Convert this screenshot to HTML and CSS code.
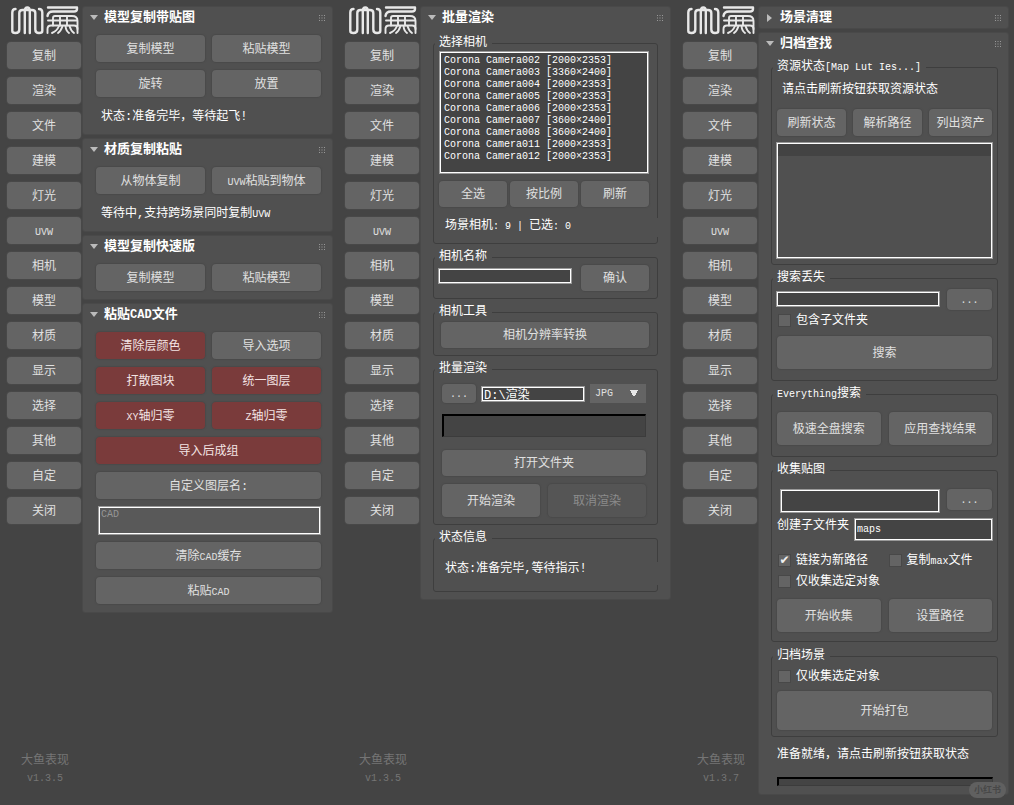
FILE: index.html
```html
<!DOCTYPE html>
<html lang="zh-CN">

<head>
    <meta charset="UTF-8">
    <meta name="viewport" content="width=device-width, initial-scale=1.0">
    <title>大鱼表现</title>
    <link rel="stylesheet" href="styles.css">
</head>

<body>
    <svg class="defs" aria-hidden="true">
        <symbol id="logo" viewBox="0 0 68 29">
            <g fill="none" stroke="#e8e8e8" stroke-width="2.4" stroke-linecap="round" stroke-linejoin="round">
                <path d="M4.500 3Q1.300 3 1.300 6.500V25Q1.300 27 4.500 27Q8.300 27 8.300 23.500V7Q8.300 4 11.500 4H21Q24.300 4 24.300 7V23.500Q24.300 27 28 27Q31.300 27 31.300 25V6.500Q31.300 3 28 3" />
                <path d="M13.800 27V5Q13.800 1.500 16.300 1.500T18.800 5V27" />
                <path d="M37 1.500H66V3Q66 5.500 63 5.500H42Q37 5.500 36.500 10" />
                <g stroke-width="1.900">
                    <path d="M36.500 27V23Q36.500 19.500 40 19.500H63Q66.500 19.500 66.500 23V27" />
                    <path d="M37 14.500H66.500M42 19.500V12Q42 10 44 10H61Q66.500 10 66.500 15V23M49 10V19.500M56 10V19.500" />
                    <path d="M41 27Q46 25 48 20M47 27Q50 25 51.500 20M54.500 20Q55 25 58 27M58.500 20Q60 25 63 27" />
                </g>
            </g>
        </symbol>
        <symbol id="grip" viewBox="0 0 6 6">
            <path d="M0 .5H6M0 3H6M0 5.500H6" stroke="#999" stroke-dasharray="1 1.500" />
        </symbol>
    </svg>

    <main class="desk">
        <!-- 复制 -->
        <section class="panel">
            <nav class="side">
                <svg class="logo" role="img" aria-label="大鱼"><use href="#logo" /></svg>
                <button>复制</button>
                <button>渲染</button>
                <button>文件</button>
                <button>建模</button>
                <button>灯光</button>
                <button><span class="en">UVW</span></button>
                <button>相机</button>
                <button>模型</button>
                <button>材质</button>
                <button>显示</button>
                <button>选择</button>
                <button>其他</button>
                <button>自定</button>
                <button>关闭</button>
                <div class="version">大鱼表现<br><span class="en">v1.3.5</span></div>
            </nav>
            <div class="rollouts">
                <details class="rollout" open>
                    <summary>模型复制带贴图<svg class="grip"><use href="#grip" /></svg></summary>
                    <div class="tools">
                        <button>复制模型</button>
                        <button>粘贴模型</button>
                        <button>旋转</button>
                        <button>放置</button>
                    </div>
                    <p class="note">状态:准备完毕，等待起飞!</p>
                </details>
                <details class="rollout" open>
                    <summary>材质复制粘贴<svg class="grip"><use href="#grip" /></svg></summary>
                    <div class="tools">
                        <button>从物体复制</button>
                        <button><span class="en">UVW</span>粘贴到物体</button>
                    </div>
                    <p class="note">等待中,支持跨场景同时复制<span class="en">UVW</span></p>
                </details>
                <details class="rollout" open>
                    <summary>模型复制快速版<svg class="grip"><use href="#grip" /></svg></summary>
                    <div class="tools last">
                        <button>复制模型</button>
                        <button>粘贴模型</button>
                    </div>
                </details>
                <details class="rollout" open>
                    <summary>粘贴<span class="en">CAD</span>文件<svg class="grip"><use href="#grip" /></svg></summary>
                    <div class="tools last">
                        <button class="red">清除层颜色</button>
                        <button>导入选项</button>
                        <button class="red">打散图块</button>
                        <button class="red">统一图层</button>
                        <button class="red"><span class="en">XY</span>轴归零</button>
                        <button class="red"><span class="en">Z</span>轴归零</button>
                        <button class="red wide">导入后成组</button>
                        <button class="wide">自定义图层名:</button>
                        <textarea class="field layer-name wide" aria-label="自定义图层名">CAD</textarea>
                        <button class="wide">清除<span class="en">CAD</span>缓存</button>
                        <button class="wide">粘贴<span class="en">CAD</span></button>
                    </div>
                </details>
            </div>
        </section>

        <!-- 渲染 -->
        <section class="panel">
            <nav class="side">
                <svg class="logo" role="img" aria-label="大鱼"><use href="#logo" /></svg>
                <button>复制</button>
                <button>渲染</button>
                <button>文件</button>
                <button>建模</button>
                <button>灯光</button>
                <button><span class="en">UVW</span></button>
                <button>相机</button>
                <button>模型</button>
                <button>材质</button>
                <button>显示</button>
                <button>选择</button>
                <button>其他</button>
                <button>自定</button>
                <button>关闭</button>
                <div class="version">大鱼表现<br><span class="en">v1.3.5</span></div>
            </nav>
            <div class="rollouts">
                <details class="rollout" open>
                    <summary>批量渲染<svg class="grip"><use href="#grip" /></svg></summary>
                    <div class="groups render">
                        <fieldset>
                            <legend>选择相机</legend>
                            <select class="field cameras" multiple aria-label="选择相机">
                                <option>Corona Camera002 [2000×2353]</option>
                                <option>Corona Camera003 [3360×2400]</option>
                                <option>Corona Camera004 [2000×2353]</option>
                                <option>Corona Camera005 [2000×2353]</option>
                                <option>Corona Camera006 [2000×2353]</option>
                                <option>Corona Camera007 [3600×2400]</option>
                                <option>Corona Camera008 [3600×2400]</option>
                                <option>Corona Camera011 [2000×2353]</option>
                                <option>Corona Camera012 [2000×2353]</option>
                            </select>
                            <div class="row thirds">
                                <button>全选</button>
                                <button>按比例</button>
                                <button>刷新</button>
                            </div>
                            <p class="status">场景相机<span class="en">: 9 | </span>已选<span class="en">: 0</span></p>
                        </fieldset>
                        <fieldset class="camera-name">
                            <legend>相机名称</legend>
                            <div class="row name-row">
                                <input class="field" type="text" aria-label="相机名称">
                                <button>确认</button>
                            </div>
                        </fieldset>
                        <fieldset class="camera-tools">
                            <legend>相机工具</legend>
                            <button class="full">相机分辨率转换</button>
                        </fieldset>
                        <fieldset class="batch">
                            <legend>批量渲染</legend>
                            <div class="row path-row">
                                <button class="browse">...</button>
                                <input class="field" type="text" value="D:\渲染" aria-label="输出路径">
                                <select class="format" aria-label="格式">
                                    <option>JPG</option>
                                    <option>PNG</option>
                                </select>
                            </div>
                            <div class="progress" role="progressbar" aria-label="渲染进度"></div>
                            <button class="full">打开文件夹</button>
                            <div class="row halves">
                                <button>开始渲染</button>
                                <button disabled>取消渲染</button>
                            </div>
                        </fieldset>
                        <fieldset class="info">
                            <legend>状态信息</legend>
                            <p class="status">状态:准备完毕,等待指示!</p>
                        </fieldset>
                    </div>
                </details>
            </div>
        </section>

        <!-- 文件 -->
        <section class="panel">
            <nav class="side">
                <svg class="logo" role="img" aria-label="大鱼"><use href="#logo" /></svg>
                <button>复制</button>
                <button>渲染</button>
                <button>文件</button>
                <button>建模</button>
                <button>灯光</button>
                <button><span class="en">UVW</span></button>
                <button>相机</button>
                <button>模型</button>
                <button>材质</button>
                <button>显示</button>
                <button>选择</button>
                <button>其他</button>
                <button>自定</button>
                <button>关闭</button>
                <div class="version">大鱼表现<br><span class="en">v1.3.7</span></div>
            </nav>
            <div class="rollouts">
                <details class="rollout">
                    <summary>场景清理<svg class="grip"><use href="#grip" /></svg></summary>
                </details>
                <details class="rollout" open>
                    <summary>归档查找<svg class="grip"><use href="#grip" /></svg></summary>
                    <div class="groups archive">
                        <fieldset>
                            <legend>资源状态<span class="en">[Map Lut Ies...]</span></legend>
                            <p class="hint">请点击刷新按钮获取资源状态</p>
                            <div class="row asset-row">
                                <button>刷新状态</button>
                                <button>解析路径</button>
                                <button>列出资产</button>
                            </div>
                            <div class="field assets"></div>
                        </fieldset>
                        <fieldset class="missing">
                            <legend>搜索丢失</legend>
                            <div class="row pick-row">
                                <input class="field" type="text" aria-label="搜索路径">
                                <button class="browse">...</button>
                            </div>
                            <label class="check"><input type="checkbox">包含子文件夹</label>
                            <button class="full">搜索</button>
                        </fieldset>
                        <fieldset class="everything">
                            <legend><span class="en">Everything</span>搜索</legend>
                            <div class="row halves">
                                <button>极速全盘搜索</button>
                                <button>应用查找结果</button>
                            </div>
                        </fieldset>
                        <fieldset class="collect">
                            <legend>收集贴图</legend>
                            <div class="row pick-row tall">
                                <input class="field" type="text" aria-label="收集路径">
                                <button class="browse">...</button>
                            </div>
                            <div class="row sub-row">
                                <label for="subdir">创建子文件夹</label>
                                <input class="field" id="subdir" type="text" value="maps">
                            </div>
                            <div class="checks">
                                <label class="check"><input type="checkbox" checked>链接为新路径</label>
                                <label class="check"><input type="checkbox"><span>复制<span class="en">max</span>文件</span></label>
                                <label class="check"><input type="checkbox">仅收集选定对象</label>
                            </div>
                            <div class="row halves">
                                <button>开始收集</button>
                                <button>设置路径</button>
                            </div>
                        </fieldset>
                        <fieldset class="pack">
                            <legend>归档场景</legend>
                            <label class="check"><input type="checkbox">仅收集选定对象</label>
                            <button class="full">开始打包</button>
                        </fieldset>
                        <p class="ready">准备就绪，请点击刷新按钮获取状态</p>
                        <div class="progress thin" role="progressbar" aria-label="进度"></div>
                    </div>
                </details>
            </div>
            <span class="watermark">小红书</span>
        </section>
    </main>
</body>

</html>
```

FILE: styles.css
```css
* {
    box-sizing: border-box;
}

body {
    margin: 0;
    background: #444;
    color: #fff;
    font: 12px/14px "Liberation Mono", "Noto Sans CJK SC", monospace;
}

button,
input,
select,
textarea {
    margin: 0;
    font: inherit;
    color: inherit;
}

p {
    margin: 0;
}

.en {
    font-size: 10px;
    line-height: 10px;
    white-space: pre;
}

.defs {
    display: none;
}

.desk {
    display: grid;
    grid-template-columns: repeat(3, minmax(0, 1fr));
    min-height: 100vh;
}

.panel {
    position: relative;
    display: flex;
    gap: 2px;
    padding: 7px 6px 7px 7px;
}

/* buttons */

button {
    height: 27px;
    padding: 2px 0 0;
    border: 0;
    border-radius: 4px;
    background: #646464;
    box-shadow: 0 0 1px 1px #4a4a4a;
    color: #e0e0e0;
    white-space: nowrap;
}

button.red {
    background: #7a3b3b;
    color: #f4e4e4;
}

button:disabled {
    background: #555;
    color: #8c8c8c;
}

.full {
    display: block;
    width: 100%;
}

/* left column */

.side {
    display: flex;
    flex-direction: column;
    gap: 8px;
    width: 74px;
    flex: none;
}

.logo {
    display: block;
    width: 68px;
    height: 29px;
    margin: -1px 0 -1px 4px;
}

.version {
    margin-top: auto;
    padding: 0 0 12px 2px;
    color: #757575;
    line-height: 17px;
    text-align: center;
}

/* rollouts */

.rollouts {
    flex: 1;
    min-width: 0;
}

.rollout {
    margin-bottom: 5px;
    border-radius: 2px;
    background: #505050;
    box-shadow: 0 0 0 1px #494949;
}

summary {
    display: flex;
    align-items: center;
    gap: 7px;
    height: 21px;
    padding: 0 7px;
    font-size: 13px;
    font-weight: bold;
    list-style: none;
}

summary .en {
    margin: 0 -7px;
    font-size: 12px;
}

summary::before {
    content: "";
    border: 4px solid transparent;
    border-left: 5px solid #bbb;
    border-right: 0;
    margin: 0 1px;
}

[open] > summary::before {
    border: 4px solid transparent;
    border-top: 5px solid #bbb;
    border-bottom: 0;
    margin: 0 -1px 0 0;
}

.grip {
    width: 6px;
    height: 6px;
    margin-left: auto;
}

.tools {
    display: grid;
    grid-template-columns: 1fr 1fr;
    gap: 8px 7px;
    padding: 7px 11px 0 13px;
}

.tools.last {
    padding-bottom: 8px;
}

.wide {
    grid-column: 1 / -1;
}

.note {
    height: 37px;
    padding-left: 18px;
    line-height: 40px;
}

/* inputs */

.field {
    min-width: 0;
    border: 1px solid #fff;
    border-radius: 0;
    outline: 1px solid #999;
    outline-offset: 0;
    background: #444;
    padding: 0 1px;
}

.layer-name {
    height: 27px;
    margin: 0 1px 0 3px;
    background: #595959;
    color: #969696;
    font-size: 10px;
    line-height: 14px;
    resize: none;
}

/* group boxes */

.groups {
    display: flex;
    flex-direction: column;
    gap: 6px;
    padding: 8px 12px 7px;
}

fieldset {
    min-width: 0;
    margin: 0;
    padding: 1px 8px 6px 5px;
    border: 1px solid #3e3e3e;
    border-radius: 3px;
}

legend {
    margin-left: -4px;
    padding: 0 5px 0 4px;
    line-height: 14px;
}

.row {
    display: flex;
}

.render button {
    height: 26px;
}

.cameras {
    display: block;
    width: calc(100% - 2px);
    height: 121px;
    margin: 1px 1px 8px;
    padding: 2px;
    overflow: hidden;
    font-size: 10px;
}

.cameras option {
    min-height: 12px;
    padding: 0 1px;
    line-height: 12px;
}

.thirds {
    gap: 3px;
}

.thirds button {
    flex: 1;
}

.status {
    height: 19px;
    margin: 11px -9px 0 1px;
    padding-left: 5px;
    background: #505050;
    line-height: 17px;
}

.render .camera-name {
    padding-bottom: 7px;
}

.name-row {
    justify-content: space-between;
}

.name-row .field {
    width: 132px;
    height: 14px;
    margin-top: 4px;
}

.name-row button {
    width: 68px;
}

.render .camera-tools {
    padding-top: 3px;
    padding-bottom: 7px;
    padding-left: 7px;
}

.camera-tools legend {
    margin-left: -6px;
}

.batch {
    padding: 8px 11px 7px 8px;
}

.batch legend {
    margin-left: -7px;
}

.batch .path-row {
    gap: 6px;
    align-items: center;
}

.batch .browse {
    width: 34px;
    height: 19px;
}

.browse {
    font-size: 10px;
}

.path-row .field {
    flex: 1;
    height: 14px;
    line-height: 12px;
}

.format {
    width: 56px;
    height: 19px;
    padding: 0 5px;
    border: 0;
    border-radius: 0;
    appearance: none;
    background-color: #646464;
    background-image: conic-gradient(from -32deg at 50% 100%, #e8e8e8 64deg, transparent 0);
    background-position: 40px 6px;
    background-repeat: no-repeat;
    background-size: 8px 7px;
    color: #e0e0e0;
    font-size: 10px;
}

.progress {
    height: 23px;
    margin: 11px 0 13px;
    border: 1px solid #3c3c3c;
    border-top: 2px solid #000;
    border-left: 2px solid #000;
    background: #444;
}

.batch .halves {
    margin-top: 8px;
}

.batch .halves button {
    height: 33px;
}

.halves {
    gap: 8px;
}

.halves button {
    flex: 1;
}

.info .status {
    height: 23px;
    margin-top: 16px;
    line-height: 14px;
}

/* archive tab */

.archive {
    padding: 6px 10px 8px 12px;
}

.archive fieldset {
    padding: 0 5px 6px;
}

.hint {
    padding: 9px 0 0 5px;
}

.asset-row {
    gap: 7px;
    margin: 12px 0 7px;
}

.asset-row button {
    flex: 68 1 0;
}

.asset-row button:last-child {
    flex-grow: 62;
}

.assets {
    height: 115px;
    padding: 0;
    background: linear-gradient(#434343 12px, #505050 12px);
}

.archive .missing {
    padding-bottom: 11px;
}

.pick-row {
    gap: 8px;
    padding-top: 4px;
}

.pick-row .field {
    flex: 1;
    height: 14px;
    margin-top: 3px;
}

.archive .browse {
    width: 45px;
    height: 21px;
}

.check {
    display: flex;
    align-items: center;
    gap: 5px;
    height: 21px;
}

.check input {
    appearance: none;
    display: grid;
    place-content: center;
    width: 13px;
    height: 13px;
    margin: 0 0 0 1px;
    background: #646464;
    box-shadow: inset 0 0 0 1px #484848;
}

.check input:checked::before {
    content: "✔";
    color: #f0f0f0;
    font: 12px/13px "DejaVu Sans", sans-serif;
}

.missing .full {
    height: 33px;
    margin-top: 5px;
}

.everything .halves {
    padding-top: 11px;
}

.archive .everything {
    padding-bottom: 11px;
}

.archive .halves button {
    height: 33px;
}

.archive .collect {
    padding-bottom: 9px;
}

.pick-row.tall {
    padding: 12px 0 0 4px;
}

.tall .field {
    height: 22px;
    margin-top: 1px;
}

.sub-row {
    gap: 6px;
    margin: 7px 0 10px;
}

.sub-row .field {
    flex: 1;
    height: 21px;
    font-size: 10px;
}

.checks {
    display: grid;
    grid-template-columns: 1fr 1fr;
    column-gap: 6px;
    margin-bottom: 7px;
}

.archive .pack {
    margin-top: 1px;
    padding-top: 3px;
}

.pack .full {
    height: 39px;
    margin-top: 4px;
}

.ready {
    padding: 5px 0 0 6px;
}

.progress.thin {
    height: 9px;
    margin: 9px 5px 0 6px;
}

.watermark {
    position: absolute;
    right: 8px;
    bottom: 8px;
    padding: 0 5px;
    border-radius: 8px;
    background: #606060;
    color: #484848;
    font: bold 9px/16px "Noto Sans CJK SC", sans-serif;
}
```
